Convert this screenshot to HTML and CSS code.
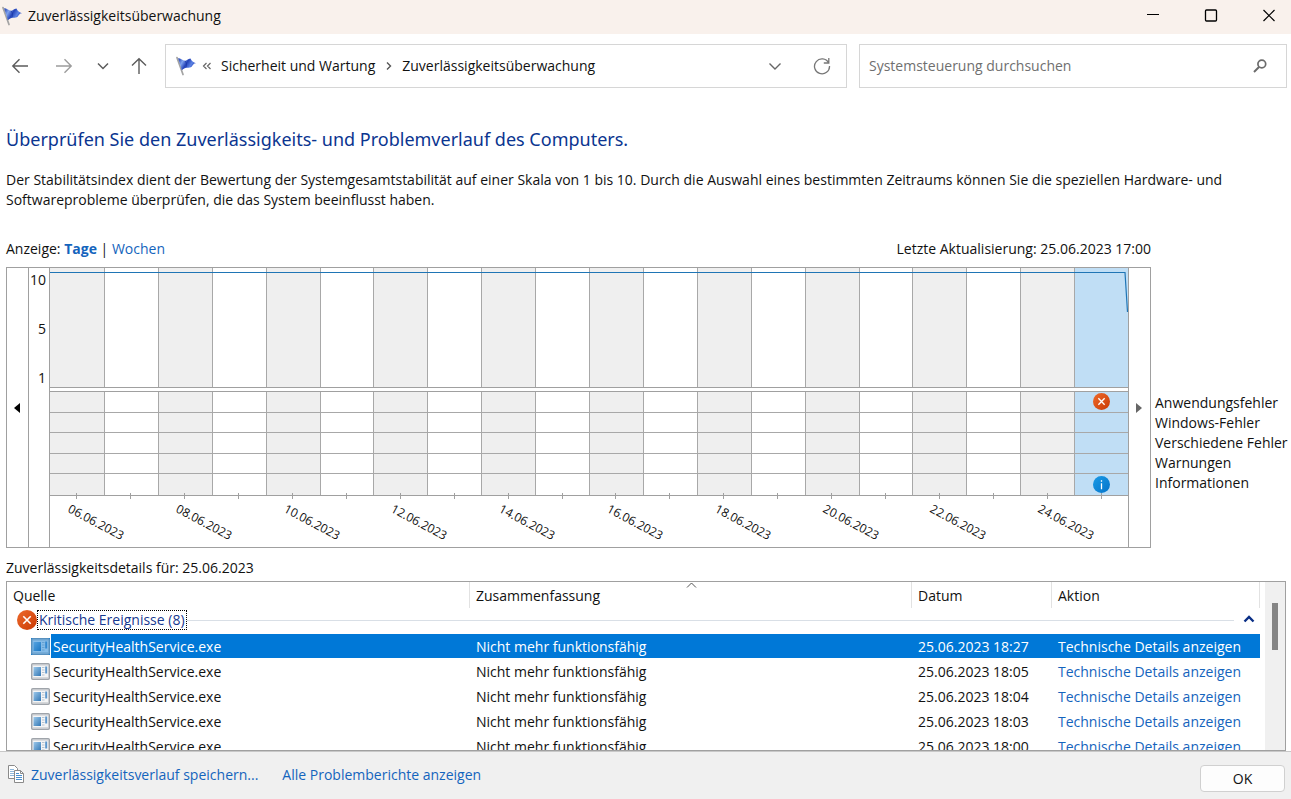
FILE: index.html
```html
<!DOCTYPE html>
<html lang="de">
<head>
<meta charset="utf-8">
<title>Zuverlässigkeitsüberwachung</title>
<link rel="stylesheet" href="styles.css">
</head>
<body>
<svg class="defs" width="0" height="0" aria-hidden="true">
  <defs>
    <linearGradient id="flagBlue" x1="0" y1="0" x2="1" y2="0.4">
      <stop offset="0" stop-color="#1c3bb0"/><stop offset="0.3" stop-color="#7fa2ee"/><stop offset="0.55" stop-color="#2443b8"/><stop offset="0.8" stop-color="#5c83e4"/><stop offset="1" stop-color="#2a49bd"/>
    </linearGradient>
    <linearGradient id="red" x1="0" y1="0" x2="1" y2="1"><stop offset="0" stop-color="#ee6a2c"/><stop offset="1" stop-color="#c93a04"/></linearGradient>
    <linearGradient id="blue" x1="0" y1="0" x2="1" y2="1"><stop offset="0" stop-color="#1a9be6"/><stop offset="1" stop-color="#0573c9"/></linearGradient>
    <linearGradient id="pane" x1="0" y1="0" x2="1" y2="1"><stop offset="0" stop-color="#9cc8ea"/><stop offset="1" stop-color="#3277b5"/></linearGradient>
    <symbol id="flag" viewBox="0 0 20 20">
      <path d="M1 1.600 7 18.500" stroke="#a3a3a3" stroke-width="1.700" stroke-linecap="round"/>
      <path d="M2.200 2.400C4 2 6 4 8.500 4.800 10.500 5.200 11.500 2.400 14.500 2.400 15.500 5 17.500 6.500 20 7.200 17.500 7 17 9 15.600 10.800 13.500 13 10 10 5.800 14.200Z" fill="url(#flagBlue)"/>
      <path d="M8.800 4.800C10.500 6 11 8.500 10 11.500" stroke="#1632a0" stroke-width="1" fill="none" opacity=".6"/>
    </symbol>
    <symbol id="error" viewBox="0 0 20 20">
      <circle cx="10" cy="10" r="10" fill="url(#red)"/>
      <path d="m6.300 6.300 7.400 7.400m0-7.400-7.400 7.400" stroke="#fff" stroke-width="1.600"/>
    </symbol>
    <symbol id="app" viewBox="0 0 19 17">
      <rect x=".75" y=".75" width="17.500" height="15.500" rx="1" fill="#f4f5f6" stroke="#9fa4aa" stroke-width="1.500"/>
      <path d="M1.500 2h16" stroke="#c4c8cc"/>
      <rect x="2.500" y="4" width="7.500" height="9" fill="url(#pane)"/>
      <path d="M11 4.500h2.500M11 7h2.500M11 9.500h2.500M11 12h2.500" stroke="#b8c4cf"/>
      <rect x="14.200" y="3.500" width="2" height="7" fill="#5c97cd"/>
      <path d="M2 14.500h15" stroke="#d5d8da"/>
    </symbol>
  </defs>
</svg>

<header class="titlebar">
  <svg class="flag" aria-hidden="true"><use href="#flag"/></svg>
  <span class="title">Zuverlässigkeitsüberwachung</span>
  <button class="winbtn" aria-label="Minimieren"><svg width="14" height="14"><path d="M1 5.500h12" stroke="#000"/></svg></button>
  <button class="winbtn" aria-label="Maximieren"><svg width="14" height="14"><rect x="1.500" y="1" width="11" height="11" rx="1" fill="none" stroke="#000" stroke-width="1.300"/></svg></button>
  <button class="winbtn" aria-label="Schließen"><svg width="14" height="14"><path d="m1.500 1 11 11m0-11-11 11" stroke="#000" stroke-width="1.200"/></svg></button>
</header>

<nav class="toolbar">
  <button class="nav" aria-label="Zurück"><svg width="18" height="18"><path d="M17 9H2M8.500 2.300 1.800 9l6.700 6.700" fill="none" stroke="#5c5c5c" stroke-width="1.400"/></svg></button>
  <button class="nav" aria-label="Vorwärts"><svg width="18" height="18"><path d="M1 9h15M9.500 2.300 16.200 9l-6.700 6.700" fill="none" stroke="#9c9c9c" stroke-width="1.400"/></svg></button>
  <button class="nav narrow" aria-label="Zuletzt besucht"><svg width="14" height="14"><path d="m2 4.500 5 5 5-5" fill="none" stroke="#5c5c5c" stroke-width="1.500"/></svg></button>
  <button class="nav narrow" aria-label="Nach oben"><svg width="18" height="18"><path d="M9 17V2M2 8.500 9 1.700l7 6.800" fill="none" stroke="#5c5c5c" stroke-width="1.400"/></svg></button>
  <div class="address">
    <svg class="flag" aria-hidden="true"><use href="#flag"/></svg>
    <svg class="more" width="10" height="12" aria-hidden="true"><path d="M4.500 3 1.500 6l3 3M8.500 3l-3 3 3 3" fill="none" stroke="#666" stroke-width="1.200"/></svg>
    <a class="crumb" href="#">Sicherheit und Wartung</a>
    <svg class="sep" width="8" height="12" aria-hidden="true"><path d="m2 2.500 3.500 3.500L2 9.500" fill="none" stroke="#555" stroke-width="1.400"/></svg>
    <a class="crumb" href="#">Zuverlässigkeitsüberwachung</a>
    <button class="addrbtn first" aria-label="Verlauf"><svg width="14" height="14"><path d="m1.500 4.500 5.500 5.500 5.500-5.500" fill="none" stroke="#666" stroke-width="1.400"/></svg></button>
    <button class="addrbtn" aria-label="Aktualisieren"><svg width="18" height="18"><path d="M15.600 5.800A7.500 7.500 0 1 0 16.500 9M15.800 1v5h-5" fill="none" stroke="#777" stroke-width="1.300"/></svg></button>
  </div>
  <div class="search">
    <input type="search" aria-label="Systemsteuerung durchsuchen" placeholder="Systemsteuerung durchsuchen">
    <svg width="14" height="14" aria-hidden="true"><circle cx="8.800" cy="5" r="3.900" fill="none" stroke="#6b6b6b" stroke-width="1.700"/><path d="M6 8 1 13" stroke="#6b6b6b" stroke-width="2"/></svg>
  </div>
</nav>

<main class="content">
  <h1>Überprüfen Sie den Zuverlässigkeits- und Problemverlauf des Computers.</h1>
  <p class="intro">Der Stabilitätsindex dient der Bewertung der Systemgesamtstabilität auf einer Skala von 1 bis 10. Durch die Auswahl eines bestimmten Zeitraums können Sie die speziellen Hardware- und<br>Softwareprobleme überprüfen, die das System beeinflusst haben.</p>

  <div class="viewbar">
    <div>Anzeige: <a class="current" href="#">Tage</a> | <a href="#">Wochen</a></div>
    <div>Letzte Aktualisierung: 25.06.2023 17:00</div>
  </div>

  <section class="report">
    <div class="chart">
      <button class="scroll" aria-label="Frühere Tage"><svg width="6" height="10"><path d="M6 0v10L0 5Z" fill="#000"/></svg></button>
      <div class="axis"><span>10</span><span>5</span><span>1</span></div>
      <div class="plot">
        <div class="index">
          <div class="days" id="indexDays"></div>
          <svg class="curve" viewBox="0 0 1078 119" preserveAspectRatio="none" aria-hidden="true"><path d="M0 4.500H1075L1077.500 44" fill="none" stroke="#1f75b5" stroke-width="1.200" vector-effect="non-scaling-stroke"/></svg>
        </div>
        <div class="events">
          <div class="days" id="eventDays"></div>
          <div class="lanes"><i></i><i></i><i></i><i></i><i></i></div>
        </div>
        <div class="dates" id="dates"></div>
      </div>
      <button class="scroll" aria-label="Spätere Tage"><svg width="6" height="10"><path d="M0 0v10l6-5Z" fill="#666"/></svg></button>
    </div>
    <ul class="legend"><li>Anwendungsfehler</li><li>Windows-Fehler</li><li>Verschiedene Fehler</li><li>Warnungen</li><li>Informationen</li></ul>
  </section>

  <h2>Zuverlässigkeitsdetails für: 25.06.2023</h2>
  <div class="details">
    <div class="list">
      <table>
        <colgroup><col class="c-source"><col class="c-summary"><col class="c-date"><col class="c-action"></colgroup>
        <thead>
          <tr><th>Quelle</th><th class="sorted">Zusammenfassung<svg class="sort" width="11" height="6" aria-hidden="true"><path d="m1 5.500 4.500-4.500L10 5.500" fill="none" stroke="#555"/></svg></th><th>Datum</th><th>Aktion</th></tr>
        </thead>
        <tbody>
          <tr class="group"><td colspan="4"><div class="grouprow">
            <svg width="20" height="20" aria-hidden="true"><use href="#error"/></svg>
            <button class="grouptitle">Kritische Ereignisse (8)</button>
            <span class="rule"></span>
            <button class="collapse" aria-label="Gruppe reduzieren"><svg width="12" height="8"><path d="m1.500 6.500 4.500-4.500 4.500 4.500" fill="none" stroke="#0a2f86" stroke-width="2.400"/></svg></button>
          </div></td></tr>
          <tr class="selected"><td><div class="source"><svg class="app"><use href="#app"/></svg><span>SecurityHealthService.exe</span></div></td><td>Nicht mehr funktionsfähig</td><td>25.06.2023 18:27</td><td><a href="#">Technische Details anzeigen</a></td></tr>
          <tr><td><div class="source"><svg class="app"><use href="#app"/></svg><span>SecurityHealthService.exe</span></div></td><td>Nicht mehr funktionsfähig</td><td>25.06.2023 18:05</td><td><a href="#">Technische Details anzeigen</a></td></tr>
          <tr><td><div class="source"><svg class="app"><use href="#app"/></svg><span>SecurityHealthService.exe</span></div></td><td>Nicht mehr funktionsfähig</td><td>25.06.2023 18:04</td><td><a href="#">Technische Details anzeigen</a></td></tr>
          <tr><td><div class="source"><svg class="app"><use href="#app"/></svg><span>SecurityHealthService.exe</span></div></td><td>Nicht mehr funktionsfähig</td><td>25.06.2023 18:03</td><td><a href="#">Technische Details anzeigen</a></td></tr>
          <tr><td><div class="source"><svg class="app"><use href="#app"/></svg><span>SecurityHealthService.exe</span></div></td><td>Nicht mehr funktionsfähig</td><td>25.06.2023 18:00</td><td><a href="#">Technische Details anzeigen</a></td></tr>
        </tbody>
      </table>
    </div>
    <div class="scrollbar"><div class="thumb"></div></div>
  </div>
</main>

<footer class="footer">
  <svg width="18" height="20" aria-hidden="true">
    <path d="M1.500 .5h6l3 3v10h-9Z" fill="#fff" stroke="#8a8a8a"/><path d="M3 4.500h4M3 6.500h4M3 8.500h4M3 10.500h4" stroke="#8fb8dc"/>
    <path d="M7.500 5.500h6l3 3v9h-9Z" fill="#fff" stroke="#8a8a8a"/><path d="M13.500 5.500v3h3" fill="none" stroke="#8a8a8a"/><path d="M9 8.500h3M9 10.500h6M9 12.500h6M9 14.500h6" stroke="#4a90cf"/>
  </svg>
  <a class="save" href="#">Zuverlässigkeitsverlauf speichern...</a>
  <a href="#">Alle Problemberichte anzeigen</a>
  <button class="ok">OK</button>
</footer>
<script src="chart.js"></script>
</body>
</html>
```
FILE: chart.js
```js
const count = 20;
const indexDays = document.getElementById('indexDays');
const eventDays = document.getElementById('eventDays');
const dates = document.getElementById('dates');
const critical = '<svg width="17" height="17" role="img" aria-label="Fehler"><use href="#error"/></svg>';
const info = '<svg width="17" height="17" viewBox="0 0 20 20" role="img" aria-label="Information"><circle cx="10" cy="10" r="10" fill="url(#blue)"/><path d="M10 8.500v7M10 5v1.800" stroke="#fff" stroke-width="1.500"/></svg>';

for (let i = 0; i < count; i++) {
  const day = document.createElement('div');
  day.className = i === count - 1 ? 'day active' : 'day';
  indexDays.append(day);
  const cell = day.cloneNode();
  if (i === count - 1) cell.innerHTML = critical + info;
  eventDays.append(cell);
  const slot = document.createElement('div');
  slot.className = 'slot';
  if (i % 2 === 0) {
    const label = document.createElement('span');
    label.textContent = String(i + 6).padStart(2, '0') + '.06.2023';
    slot.append(label);
  }
  dates.append(slot);
}
```
FILE: styles.css
```css
* { box-sizing: border-box; }
body {
  margin: 0; height: 100vh; display: flex; flex-direction: column; overflow: hidden;
  background: #fff; color: #111;
  font: 14px/20px "Open Sans", "Noto Sans", sans-serif;
}
button { border: 0; padding: 0; background: none; color: inherit; font: inherit; }
svg { display: block; flex: none; }
a { color: #1464bd; text-decoration: none; }
.defs { position: absolute; }
.flag { width: 20px; height: 20px; }

.titlebar { display: flex; align-items: center; height: 34px; flex: none; background: #f9f1ec; padding: 0 2px 3px; }
.titlebar .title { flex: 1; padding-left: 6px; }
.winbtn { width: 58px; display: grid; place-items: center; }
.winbtn:last-child { margin-right: -9px; }

.toolbar { display: flex; align-items: center; flex: none; padding: 10px 4px 0 0; height: 54px; }
.nav { width: 44px; height: 40px; display: grid; place-items: center; }
.nav:first-child { width: 40px; margin-right: 2px; }
.nav.narrow { width: 34px; }
.nav.narrow + .narrow { margin-right: 7px; width: 38px; }
.address, .search { display: flex; align-items: center; height: 44px; border: 1px solid #d6d6d6; }
.address { flex: 1; padding: 0 1px 0 10px; }
.search { width: 428px; margin-left: 12px; padding: 0 19px 0 9px; }
.more { margin: 0 9px 0 6px; }
.sep { margin: 0 9px 0 10px; }
.crumb { color: #111; white-space: nowrap; }
.addrbtn { width: 47px; height: 40px; display: grid; place-items: center; }
.addrbtn.first { margin-left: auto; }
.search input { flex: 1; min-width: 0; border: 0; outline: 0; padding: 0; font: inherit; background: none; }
.search input::placeholder { color: #6f6f6f; opacity: 1; }

.content { flex: 1; min-height: 0; display: flex; flex-direction: column; padding: 38px 5px 0 6px; }
h1 { margin: 0; font-family: "Noto Sans", "Open Sans", sans-serif; font-size: 18px; line-height: 26px; font-weight: 400; color: #0b3590; }
.intro { margin: 18px 0 0; white-space: nowrap; }
.viewbar { display: flex; justify-content: space-between; margin: 29px 135px 0 0; }
.current { font-weight: 700; }

.report { display: flex; margin-top: 8px; flex: none; }
.chart { flex: 1; display: flex; border: 1px solid #a0a0a0; height: 281px; }
.scroll { width: 21px; padding-right: 1px; display: grid; place-items: center; }
.axis { width: 22px; padding: 2px 3px 0 0; border: solid #a0a0a0; border-width: 0 1px; text-align: right; display: flex; flex-direction: column; gap: 29px; }
.plot { flex: 1; border-right: 1px solid #a0a0a0; }
.days { display: grid; grid-template-columns: repeat(20, 1fr); height: 100%; }
.day { border-left: 1px solid #a8a8a8; }
.day:first-child { border-left: 0; }
.day:nth-child(odd) { background: #efefef; }
.day.active { background: #c0def5; }
.index { height: 120px; border-bottom: 1px solid #a0a0a0; position: relative; }
.curve { position: absolute; inset: 0; width: 100%; height: 119px; }
.events { height: 105px; margin-top: 3px; border: solid #a0a0a0; border-width: 1px 0; position: relative; }
.events .active { display: flex; flex-direction: column; align-items: center; justify-content: space-between; padding: 1px 0 2px; }
.lanes { position: absolute; inset: 0; display: grid; grid-template-rows: repeat(5, 1fr); }
.lanes i { border-bottom: 1px solid #a8a8a8; }
.lanes i:last-child { border-bottom: 0; }
.events .active svg { position: relative; z-index: 1; }
.dates { display: grid; grid-template-columns: repeat(20, 1fr); margin-top: -3px; position: relative; }
.slot { height: 6px; background: linear-gradient(#a0a0a0, #a0a0a0) center / 1px 6px no-repeat; position: relative; }
.slot span { position: absolute; left: 19px; top: 7px; font-size: 12px; line-height: 16px; transform-origin: 0 50%; transform: rotate(28deg); }
.legend { width: 135px; list-style: none; margin: 0; padding: 126px 0 0 4px; white-space: nowrap; }

h2 { margin: 10px 0 3px; font-size: 14px; line-height: 20px; font-weight: 400; }
.details { flex: 1; min-height: 0; display: flex; border: 1px solid #a0a0a0; }
.list { flex: 1; overflow: hidden; padding-right: 5px; }
.scrollbar { width: 20px; background: #f0f0f0; padding: 21px 7px 0; }
.thumb { height: 47px; background: #858585; }
table { width: 100%; table-layout: fixed; border-collapse: separate; border-spacing: 0; }
.c-source { width: 463px; }
.c-date { width: 140px; }
.c-action { width: 208px; }
th { height: 26px; padding: 2px 0 0 6px; text-align: left; font-weight: 400; border-right: 1px solid #e2e2e2; position: relative; }
.sort { position: absolute; left: 50%; top: 0; margin-left: -5px; }
td { height: 25px; padding: 1px 0 0 6px; border-bottom: 1px solid #fff; white-space: nowrap; }
td:first-child { padding: 0 0 0 24px; }
.group td:first-child { height: 26px; padding: 0 0 1px 10px; }
.grouprow { display: flex; align-items: center; }
.grouptitle { height: 20px; line-height: 18px; padding: 0 1px; border: 1px dotted #000; color: #17388f; }
.rule { flex: 1; height: 1px; background: #d9dfe6; }
.collapse { margin: 0 5px 2px 9px; }
.source { display: flex; align-items: center; }
.app { width: 19px; height: 17px; margin-right: 1px; }
.source span { flex: 1; height: 24px; line-height: 20px; padding: 3px 0 0 2px; }
.selected span, .selected td + td { background: #0078d7; background-clip: padding-box; color: #fff; }
.selected a { color: #fff; }
.selected .app { background: #0078d7; }
.selected .app use { opacity: .55; }

.footer { flex: none; height: 48px; display: flex; align-items: flex-start; padding: 13px 6px 0 7px; background: #f0f0f0; border-top: 1px solid #c8c8c8; }
.footer .save { margin: 0 24px 0 6px; }
.ok { width: 85px; height: 27px; margin-left: auto; background: #fdfdfd; border: 1px solid #d0d0d0; border-radius: 4px; }
```
